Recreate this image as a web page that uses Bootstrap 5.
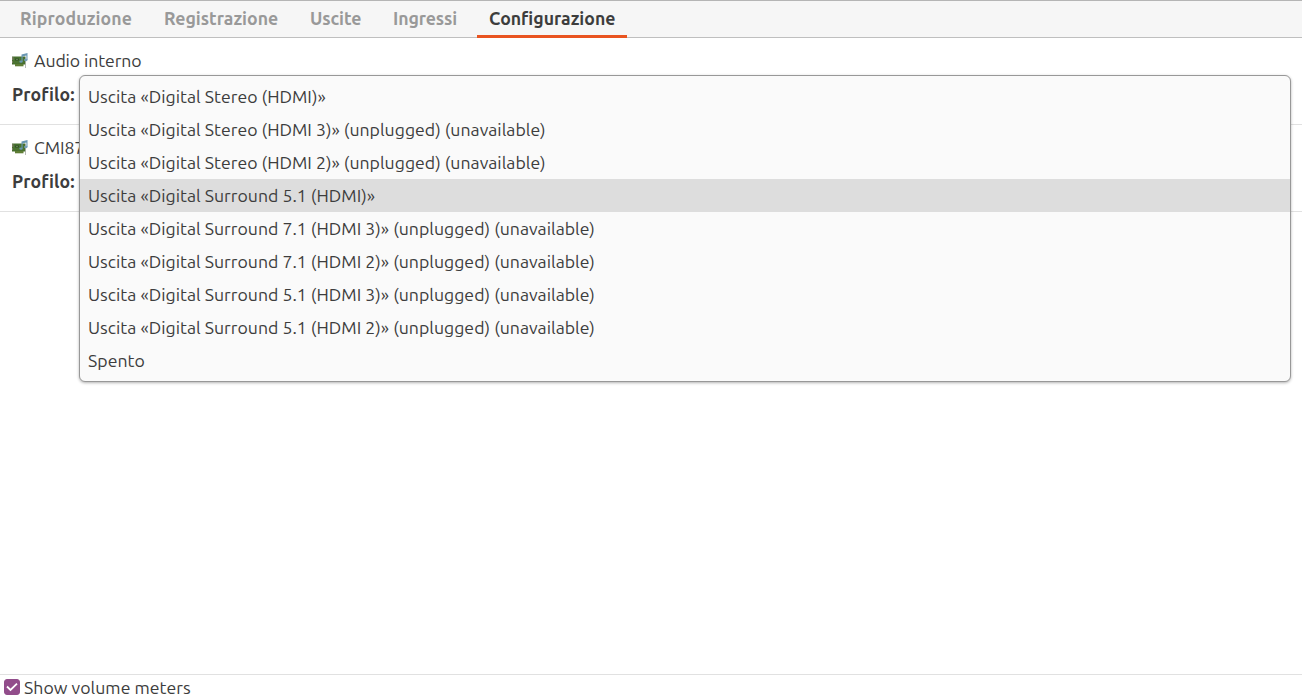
<!DOCTYPE html>
<html lang="it">
<head>
<meta charset="utf-8">
<meta name="viewport" content="width=device-width, initial-scale=1">
<title>Controllo volume</title>
<link href="https://cdn.jsdelivr.net/npm/bootstrap@5.3.0/dist/css/bootstrap.min.css" rel="stylesheet">
<style>
  body { font-family: Ubuntu, "Noto Sans", sans-serif; font-size: 17.68px; line-height: 22px; color: #3d3d3d; background: #fff; overflow: hidden; }
  .tabs-bar { height: 38px; background: #f6f6f6; border-top: 1px solid #b5b5b5; border-bottom: 1px solid #bfbfbf; padding-left: 8px; gap: 8px; }
  .tabs-bar .nav-link { height: 37px; padding: 7px 12px 0; color: #999; font-size: 17.68px; font-weight: 700; line-height: 22px; white-space: nowrap; }
  .tabs-bar .nav-link.active { color: #3d3d3d; border-bottom: 3px solid #e95420; }
  .tabs-bar .t1 { width: 136px; letter-spacing: .13px; } .t2 { width: 138px; } .t3 { width: 75px; letter-spacing: -.1px; } .t4 { width: 88px; letter-spacing: -.1px; } .t5 { width: 150px; }
  .device { height: 87px; padding: 12px 12px 0; border-bottom: 1px solid #e1e1e1; }
  .device svg { margin-right: 6px; }
  .device-name { letter-spacing: -.1px; }
  .profile-label { font-weight: 700; letter-spacing: .1px; margin-top: 12px; }
  .profiles { left: 79px; top: 75px; width: 1212px; height: 307px; padding: 4px 0; background: #fafafa; border: 1px solid #989898; border-radius: 6px; box-shadow: 0 1px 3px rgba(0,0,0,.3); --bs-dropdown-font-size: 17.68px; }
  .profiles .dropdown-item { height: 33px; padding: 6px 8px 0; color: #3d3d3d; line-height: 22px; letter-spacing: .015px; }
  .profiles .dropdown-item.active { background: #ddd; }
  .meters { height: 26px; border-top: 1px solid #e1e1e1; padding-left: 4px; gap: 4px; }
  .meters label { padding-top: 2px; letter-spacing: .03px; }
  .check-box { width: 16px; height: 16px; }
  .check-box .form-check-input { width: 16px; height: 16px; margin: 0; border-radius: 3px; border-color: #924d8b; background-color: #924d8b; display: block; }
  .check-box .form-check-input:checked { background-image: none; }
  .check-box svg { left: 0; top: 0; pointer-events: none; }
</style>
</head>
<body class="vh-100 d-flex flex-column position-relative">
<svg width="0" height="0" class="position-absolute">
  <symbol id="soundcard" viewBox="0 0 16 16">
    <path d="M0 3.5h13.5v8H0z" fill="#456c2e"/>
    <path d="M1 4.5h11.5v6H1z" fill="#4b7431"/>
    <path d="M0 4h1.5v3H0zM0 8h1v2H0z" fill="#777b5e"/>
    <path d="M3 5.5h4v2H3z" fill="#2f4f2b"/><path d="M4 6h2v1H4z" fill="#5f7d4c"/>
    <path d="M3 11h8.5v2.3H3z" fill="#5f7d35"/>
    <path d="M13.2 4h.8v11h-.8z" fill="#a5aaa3"/>
    <path d="M9.5 1.6L15.5 0v7h-1.1V2.6l-3.8 1v4.9H9.5z" fill="#6997b3"/>
    <ellipse cx="9" cy="8.6" rx="1.7" ry="1.2" fill="#6997b3"/><ellipse cx="13.8" cy="7" rx="1.7" ry="1.2" fill="#76a0ba"/>
  </symbol>
</svg>
<nav class="nav tabs-bar flex-nowrap flex-shrink-0">
  <a class="nav-link t1" href="#">Riproduzione</a>
  <a class="nav-link t2" href="#">Registrazione</a>
  <a class="nav-link t3" href="#">Uscite</a>
  <a class="nav-link t4" href="#">Ingressi</a>
  <a class="nav-link t5 active" href="#">Configurazione</a>
</nav>
<main class="flex-grow-1">
  <section class="device">
    <div class="d-flex align-items-center"><svg width="16" height="16"><use href="#soundcard"/></svg><span class="device-name">Audio interno</span></div>
    <div class="profile-label">Profilo:</div>
  </section>
  <section class="device">
    <div class="d-flex align-items-center"><svg width="16" height="16"><use href="#soundcard"/></svg><span class="device-name">CMI87</span></div>
    <div class="profile-label">Profilo:</div>
  </section>
</main>
<div class="dropdown-menu show profiles position-absolute">
  <a class="dropdown-item" href="#">Uscita «Digital Stereo (HDMI)»</a>
  <a class="dropdown-item" href="#">Uscita «Digital Stereo (HDMI 3)» (unplugged) (unavailable)</a>
  <a class="dropdown-item" href="#">Uscita «Digital Stereo (HDMI 2)» (unplugged) (unavailable)</a>
  <a class="dropdown-item active" href="#">Uscita «Digital Surround 5.1 (HDMI)»</a>
  <a class="dropdown-item" href="#">Uscita «Digital Surround 7.1 (HDMI 3)» (unplugged) (unavailable)</a>
  <a class="dropdown-item" href="#">Uscita «Digital Surround 7.1 (HDMI 2)» (unplugged) (unavailable)</a>
  <a class="dropdown-item" href="#">Uscita «Digital Surround 5.1 (HDMI 3)» (unplugged) (unavailable)</a>
  <a class="dropdown-item" href="#">Uscita «Digital Surround 5.1 (HDMI 2)» (unplugged) (unavailable)</a>
  <a class="dropdown-item" href="#">Spento</a>
</div>
<footer class="meters d-flex align-items-start flex-shrink-0">
  <div class="check-box position-relative mt-1">
    <input class="form-check-input" type="checkbox" id="meters" checked>
    <svg class="position-absolute" width="16" height="16" viewBox="0 0 16 16"><path d="M3 7.5l3.5 3.5L13 4.7" fill="none" stroke="#fff" stroke-width="1.8"/></svg>
  </div>
  <label for="meters">Show volume meters</label>
</footer>
<script src="https://cdn.jsdelivr.net/npm/bootstrap@5.3.0/dist/js/bootstrap.bundle.min.js"></script>
</body>
</html>
